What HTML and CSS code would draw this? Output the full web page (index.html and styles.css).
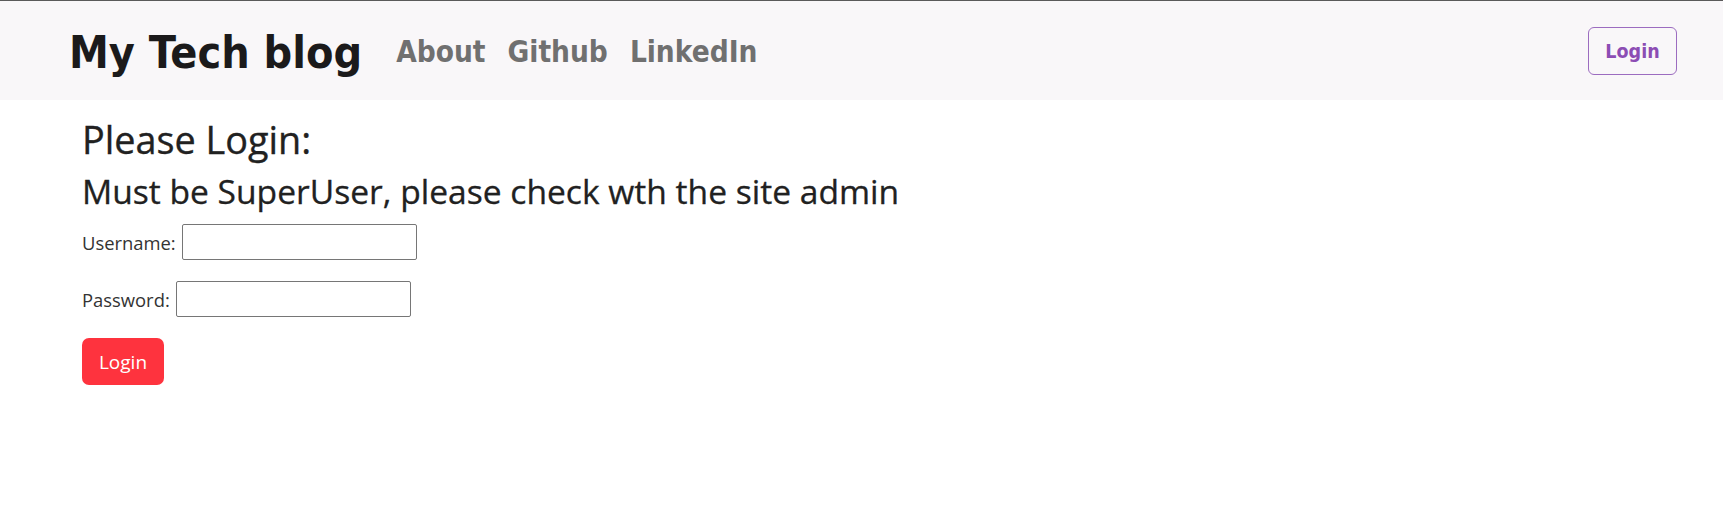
FILE: index.html
```html
<!DOCTYPE html>
<html lang="en">
<head>
<meta charset="utf-8">
<title>My Tech blog</title>
<link rel="stylesheet" href="styles.css">
</head>
<body>
<header class="navbar">
  <div class="nav-left">
    <a class="brand" href="#">My Tech blog</a>
    <nav class="nav-links">
      <a href="#">About</a>
      <a href="#">Github</a>
      <a href="#">LinkedIn</a>
    </nav>
  </div>
  <a class="nav-login" href="#">Login</a>
</header>
<main class="content">
  <h2 class="title">Please Login:</h2>
  <h3 class="subtitle">Must be SuperUser, please check wth the site admin</h3>
  <form class="login-form">
    <div class="row"><label>Username:</label><input type="text" class="field"></div>
    <div class="row"><label>Password:</label><input type="password" class="field"></div>
    <button type="button" class="btn-login">Login</button>
  </form>
</main>
</body>
</html>
```
FILE: styles.css
```css
* { box-sizing: border-box; }
html, body { margin: 0; padding: 0; background: #fff; }
body {
  font-family: "Open Sans", "Noto Sans", sans-serif;
  color: #212529;
}
.navbar {
  height: 100px;
  border-top: 1px solid #5a5a5a;
  background: #f9f7f9;
  display: flex;
  align-items: center;
  justify-content: space-between;
  padding: 0 46px 0 69px;
}
.nav-left { display: flex; align-items: center; }
.brand, .nav-links a, .nav-login {
  font-family: "DejaVu Sans Condensed", "DejaVu Sans", sans-serif;
  font-stretch: condensed;
  font-weight: 700;
  text-decoration: none;
}
.brand {
  font-size: 44.5px;
  color: #1b1a1b;
  margin-top: 4px;
}
.nav-links { display: flex; gap: 22px; margin-left: 34px; margin-top: 2px; }
.nav-links a { font-size: 29.5px; color: #707070; }
.nav-login {
  font-size: 19.5px;
  color: #8c4db4;
  border: 1px solid #9c6cc0;
  border-radius: 6px;
  width: 89px;
  height: 48px;
  display: flex;
  align-items: center;
  justify-content: center;
  margin-top: 1px;
}
.content { padding: 16.6px 0 0 82px; }
.title {
  font-size: 37.8px;
  font-weight: 400;
  line-height: 1.2;
  margin: 0 0 8.8px;
  color: #212121;
  -webkit-text-stroke: 0.35px #212121;
}
.subtitle {
  font-size: 33.6px;
  font-weight: 400;
  line-height: 1.2;
  margin: 0 0 13px;
  color: #212121;
  -webkit-text-stroke: 0.3px #212121;
}
.login-form { display: flex; flex-direction: column; align-items: flex-start; }
.row { display: flex; align-items: center; gap: 6px; margin-bottom: 21px; font-size: 18.4px; color: #333; }
.field {
  width: 235px;
  height: 36px;
  border: 1px solid #767676;
  border-radius: 2px;
  background: #fff;
  margin: 0;
}
.btn-login {
  width: 82px;
  height: 47px;
  background: #fe333e;
  color: #fff;
  border: none;
  border-radius: 7px;
  font-family: "Open Sans", "Noto Sans", sans-serif;
  font-size: 19px;
  padding: 0;
}
```
